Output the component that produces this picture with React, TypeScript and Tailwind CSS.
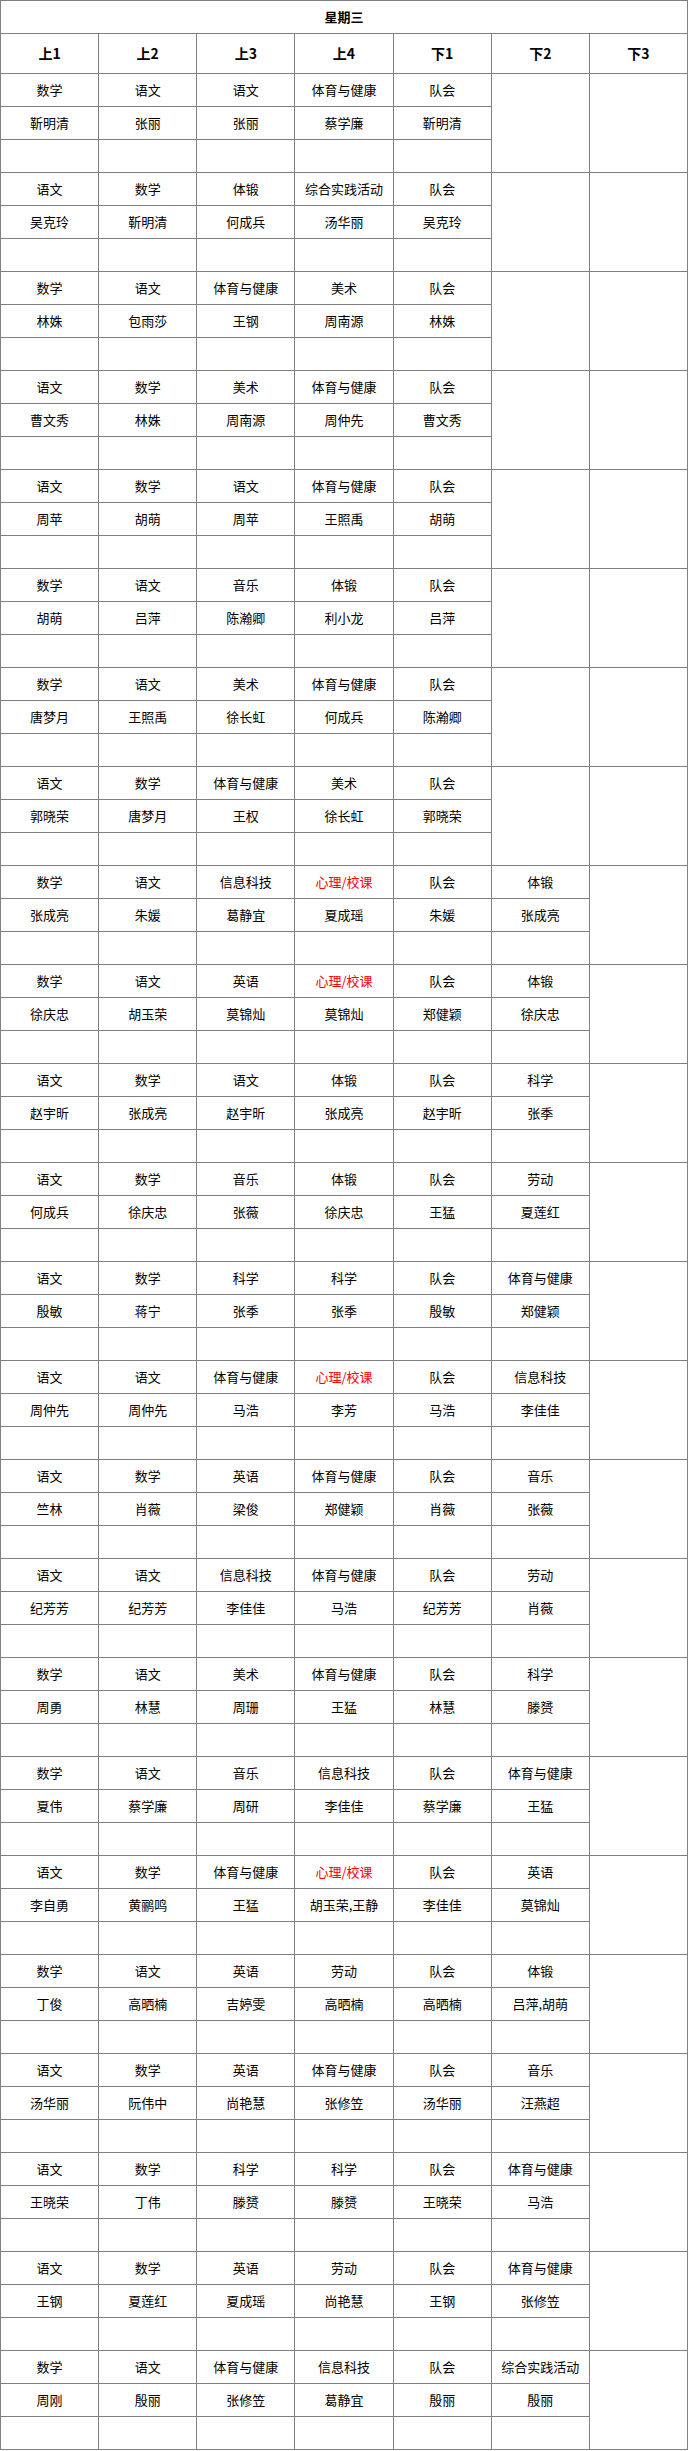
import React from 'react';

type Group = { subjects: string[]; teachers: string[] };

const headers = ['上1', '上2', '上3', '上4', '下1', '下2', '下3'];

// 下2 is only filled from the ninth class on
const groups: Group[] = [
    { subjects: ['数学', '语文', '语文', '体育与健康', '队会'], teachers: ['靳明清', '张丽', '张丽', '蔡学廉', '靳明清'] },
    { subjects: ['语文', '数学', '体锻', '综合实践活动', '队会'], teachers: ['吴克玲', '靳明清', '何成兵', '汤华丽', '吴克玲'] },
    { subjects: ['数学', '语文', '体育与健康', '美术', '队会'], teachers: ['林姝', '包雨莎', '王钢', '周南源', '林姝'] },
    { subjects: ['语文', '数学', '美术', '体育与健康', '队会'], teachers: ['曹文秀', '林姝', '周南源', '周仲先', '曹文秀'] },
    { subjects: ['语文', '数学', '语文', '体育与健康', '队会'], teachers: ['周苹', '胡萌', '周苹', '王照禹', '胡萌'] },
    { subjects: ['数学', '语文', '音乐', '体锻', '队会'], teachers: ['胡萌', '吕萍', '陈瀚卿', '利小龙', '吕萍'] },
    { subjects: ['数学', '语文', '美术', '体育与健康', '队会'], teachers: ['唐梦月', '王照禹', '徐长虹', '何成兵', '陈瀚卿'] },
    { subjects: ['语文', '数学', '体育与健康', '美术', '队会'], teachers: ['郭晓荣', '唐梦月', '王权', '徐长虹', '郭晓荣'] },
    { subjects: ['数学', '语文', '信息科技', '心理/校课', '队会', '体锻'], teachers: ['张成亮', '朱媛', '葛静宜', '夏成瑶', '朱媛', '张成亮'] },
    { subjects: ['数学', '语文', '英语', '心理/校课', '队会', '体锻'], teachers: ['徐庆忠', '胡玉荣', '莫锦灿', '莫锦灿', '郑健颖', '徐庆忠'] },
    { subjects: ['语文', '数学', '语文', '体锻', '队会', '科学'], teachers: ['赵宇昕', '张成亮', '赵宇昕', '张成亮', '赵宇昕', '张季'] },
    { subjects: ['语文', '数学', '音乐', '体锻', '队会', '劳动'], teachers: ['何成兵', '徐庆忠', '张薇', '徐庆忠', '王猛', '夏莲红'] },
    { subjects: ['语文', '数学', '科学', '科学', '队会', '体育与健康'], teachers: ['殷敏', '蒋宁', '张季', '张季', '殷敏', '郑健颖'] },
    { subjects: ['语文', '语文', '体育与健康', '心理/校课', '队会', '信息科技'], teachers: ['周仲先', '周仲先', '马浩', '李芳', '马浩', '李佳佳'] },
    { subjects: ['语文', '数学', '英语', '体育与健康', '队会', '音乐'], teachers: ['竺林', '肖薇', '梁俊', '郑健颖', '肖薇', '张薇'] },
    { subjects: ['语文', '语文', '信息科技', '体育与健康', '队会', '劳动'], teachers: ['纪芳芳', '纪芳芳', '李佳佳', '马浩', '纪芳芳', '肖薇'] },
    { subjects: ['数学', '语文', '美术', '体育与健康', '队会', '科学'], teachers: ['周勇', '林慧', '周珊', '王猛', '林慧', '滕赟'] },
    { subjects: ['数学', '语文', '音乐', '信息科技', '队会', '体育与健康'], teachers: ['夏伟', '蔡学廉', '周研', '李佳佳', '蔡学廉', '王猛'] },
    { subjects: ['语文', '数学', '体育与健康', '心理/校课', '队会', '英语'], teachers: ['李自勇', '黄鹂鸣', '王猛', '胡玉荣,王静', '李佳佳', '莫锦灿'] },
    { subjects: ['数学', '语文', '英语', '劳动', '队会', '体锻'], teachers: ['丁俊', '高晒楠', '吉婷雯', '高晒楠', '高晒楠', '吕萍,胡萌'] },
    { subjects: ['语文', '数学', '英语', '体育与健康', '队会', '音乐'], teachers: ['汤华丽', '阮伟中', '尚艳慧', '张修笠', '汤华丽', '汪燕超'] },
    { subjects: ['语文', '数学', '科学', '科学', '队会', '体育与健康'], teachers: ['王晓荣', '丁伟', '滕赟', '滕赟', '王晓荣', '马浩'] },
    { subjects: ['语文', '数学', '英语', '劳动', '队会', '体育与健康'], teachers: ['王钢', '夏莲红', '夏成瑶', '尚艳慧', '王钢', '张修笠'] },
    { subjects: ['数学', '语文', '体育与健康', '信息科技', '队会', '综合实践活动'], teachers: ['周刚', '殷丽', '张修笠', '葛静宜', '殷丽', '殷丽'] },
];

const cell = 'border border-[#808080] h-[33px] p-0 text-center align-middle text-[13px] whitespace-nowrap';

export default function App() {
    return (
        <div className="w-[688px] bg-white text-black" style={{ fontFamily: '"Noto Sans CJK SC", "Noto Sans", sans-serif' }}>
            <table className="w-[688px] table-fixed border-collapse">
                <tbody>
                    <tr>
                        <td colSpan={7} className="border border-[#808080] h-[33px] p-0 text-center text-[13px] font-bold">星期三</td>
                    </tr>
                    <tr>
                        {headers.map((h) => (
                            <td key={h} className="border border-[#808080] h-[40px] p-0 text-center text-[14px] font-bold">{h}</td>
                        ))}
                    </tr>
                    {groups.map((g, i) => {
                        const short = g.subjects.length === 5;
                        return (
                            <React.Fragment key={i}>
                                <tr>
                                    {g.subjects.map((s, j) => (
                                        <td key={j} className={`${cell} ${s === '心理/校课' ? 'text-[#ff0000]' : ''}`}>{s}</td>
                                    ))}
                                    {short && <td rowSpan={3} className="border border-[#808080] p-0"></td>}
                                    <td rowSpan={3} className="border border-[#808080] p-0"></td>
                                </tr>
                                <tr>
                                    {g.teachers.map((t, j) => (
                                        <td key={j} className={cell}>{t}</td>
                                    ))}
                                </tr>
                                <tr>
                                    {g.teachers.map((_, j) => (
                                        <td key={j} className={cell}></td>
                                    ))}
                                </tr>
                            </React.Fragment>
                        );
                    })}
                </tbody>
            </table>
        </div>
    );
}
